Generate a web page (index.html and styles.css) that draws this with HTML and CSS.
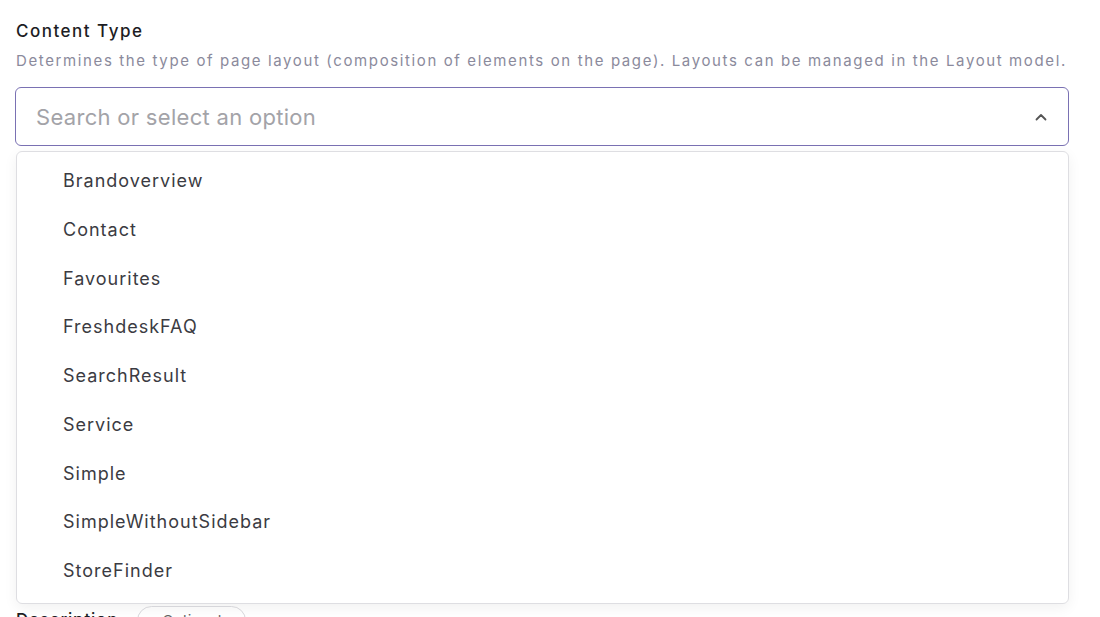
FILE: index.html
```html
<!DOCTYPE html>
<html lang="en">

<head>
    <meta charset="UTF-8">
    <meta name="viewport" content="width=device-width, initial-scale=1.0">
    <title>Content Type</title>
    <link rel="stylesheet" href="styles.css">
</head>

<body>
    <div class="field">
        <label class="field-label">Content Type</label>
        <p class="field-hint">Determines the type of page layout (composition of elements on the page). Layouts can be managed in the Layout model.</p>

        <div class="select">
            <div class="select-input">
                <span class="placeholder">Search or select an option</span>
                <svg class="chevron" width="14" height="14" viewBox="0 0 14 14">
                    <path d="M2.5 9.5 L7 5 L11.5 9.5" fill="none" stroke="#555" stroke-width="1.8" stroke-linecap="round" stroke-linejoin="round" />
                </svg>
            </div>
            <ul class="select-menu">
                <li>Brandoverview</li>
                <li>Contact</li>
                <li>Favourites</li>
                <li>FreshdeskFAQ</li>
                <li>SearchResult</li>
                <li>Service</li>
                <li>Simple</li>
                <li>SimpleWithoutSidebar</li>
                <li>StoreFinder</li>
            </ul>
        </div>
    </div>

    <div class="next-field">
        <span class="next-label">Description</span>
        <span class="pill">Optional</span>
    </div>
</body>

</html>
```

FILE: styles.css
```css
html,
body {
    height: 100%;
}

body {
    margin: 0;
    background-color: white;
    font-family: Inter, "Noto Sans", sans-serif;
    overflow: hidden;
    padding: 20px 31px 0 16px;
    box-sizing: border-box;
}

.field-label {
    display: block;
    font-size: 17px;
    font-weight: 500;
    letter-spacing: 1.5px;
    color: #1d1d24;
    line-height: 22px;
}

.field-hint {
    margin: 9px 0 0;
    font-size: 15px;
    line-height: 20px;
    letter-spacing: 1.62px;
    color: #8b8a9c;
    white-space: nowrap;
}

.select {
    margin-top: 16px;
}

.select-input {
    display: flex;
    align-items: center;
    justify-content: space-between;
    height: 57px;
    margin-left: -1px;
    padding: 0 20px 0 20px;
    border: 1.5px solid #7a71b3;
    border-radius: 6px;
}

.placeholder {
    font-size: 22px;
    letter-spacing: 0.3px;
    color: #a3a3a8;
}

.select-menu {
    list-style: none;
    margin: 5px 0 0;
    padding: 5px 0 7px;
    border: 1px solid #dedee2;
    border-radius: 6px;
    box-shadow: 0 4px 14px rgba(0, 0, 0, 0.06);
}

.select-menu li {
    height: 48.75px;
    line-height: 48.75px;
    padding-left: 46px;
    font-size: 18px;
    letter-spacing: 1px;
    color: #3b3b42;
}

.next-field {
    display: flex;
    align-items: center;
    gap: 19px;
    margin-top: 2px;
}

.next-label {
    font-size: 17px;
    font-weight: 500;
    letter-spacing: 0.8px;
    color: #1d1d24;
}

.pill {
    padding: 4px 24px;
    border: 1px solid #d6d6da;
    border-radius: 16px;
    font-size: 15px;
    color: #666;
}
```
